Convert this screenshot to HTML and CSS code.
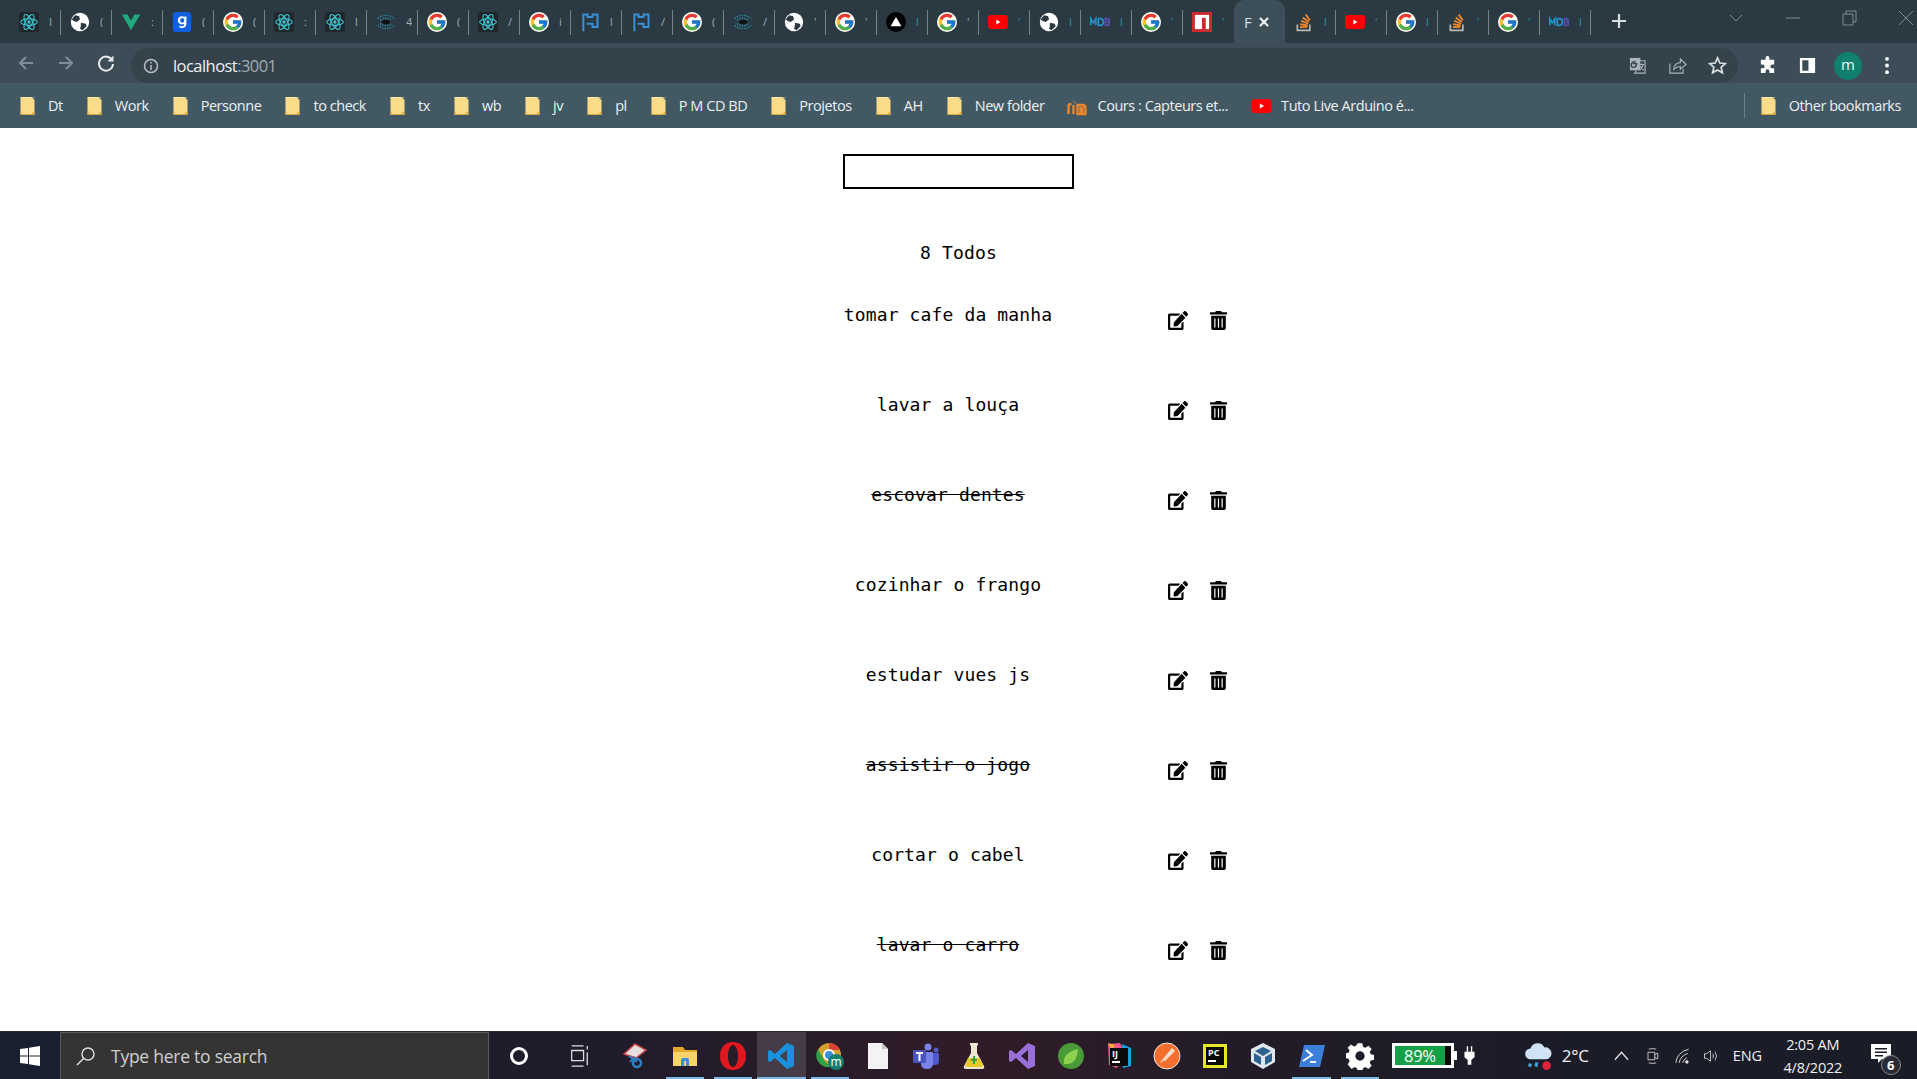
FILE: index.html
```html
<!DOCTYPE html>
<html lang="en">
<head>
<meta charset="utf-8">
<title>Todos</title>
<link rel="stylesheet" href="styles.css">
</head>
<body>
<svg class="defs" aria-hidden="true">
  <symbol id="react" viewBox="0 0 24 24"><rect width="24" height="24" rx="3" fill="#20272b"/><g fill="none" stroke="#3fc7d4" stroke-width="1.3"><ellipse cx="12" cy="12" rx="10" ry="4"/><ellipse cx="12" cy="12" rx="10" ry="4" transform="rotate(60 12 12)"/><ellipse cx="12" cy="12" rx="10" ry="4" transform="rotate(120 12 12)"/></g><circle cx="12" cy="12" r="2" fill="#3fc7d4"/></symbol>
  <symbol id="globe" viewBox="0 0 24 24"><circle cx="12" cy="12" r="11" fill="#fff"/><path d="M6 4l5 1 1 4-4 3-3-1-3-2zM13 13l6 1 1 3-5 5-3-2 1-3z" fill="#2a3840"/></symbol>
  <symbol id="vue" viewBox="0 0 24 24"><path d="M1 3h7l4 7 4-7h7L12 22z" fill="#1ea97c"/><path d="M8 3l4 7 4-7h-3l-1 2-1-2z" fill="#2a3840"/></symbol>
  <symbol id="gblue" viewBox="0 0 24 24"><rect x="1" width="22" height="24" rx="4" fill="#0f5fe0"/><path d="M12 5c-3 0-5 2-5 5s2 5 5 5c1 0 2-.4 2.6-1 0 2-.8 3-2.8 3-1 0-2-.3-3-.8v2.400c1 .4 2 .6 3.200.6 3.500 0 5.300-2 5.300-5.400V5.300h-2.300v.8C14 5.400 13 5 12 5zm.3 2.200c1.400 0 2.400 1.100 2.400 2.800s-1 2.800-2.400 2.800-2.500-1.100-2.500-2.800 1.100-2.800 2.500-2.800z" fill="#fff"/></symbol>
  <symbol id="google" viewBox="0 0 48 48"><circle cx="24" cy="24" r="24" fill="#fff"/><path d="M43.600 20.100H42V20H24v8h11.300C33.700 32.700 29.200 36 24 36c-6.600 0-12-5.400-12-12s5.400-12 12-12c3.100 0 5.800 1.200 8 3l5.700-5.700C34 6.100 29.300 4 24 4 13 4 4 13 4 24s9 20 20 20 20-9 20-20c0-1.300-.1-2.700-.4-3.900z" fill="#fbc02d"/><path d="M6.300 14.700l6.600 4.800C14.700 15.100 19 12 24 12c3.100 0 5.800 1.200 8 3l5.700-5.700C34 6.100 29.300 4 24 4 16.300 4 9.700 8.300 6.300 14.700z" fill="#e53935"/><path d="M24 44c5.200 0 9.900-2 13.400-5.200l-6.200-5.200C29.200 35.100 26.700 36 24 36c-5.200 0-9.600-3.300-11.300-7.900l-6.500 5C9.500 39.600 16.200 44 24 44z" fill="#4caf50"/><path d="M43.600 20.100H42V20H24v8h11.300c-.8 2.200-2.200 4.200-4.100 5.600l6.200 5.200C37 39.200 44 34 44 24c0-1.300-.1-2.700-.4-3.900z" fill="#1976d2"/></symbol>
  <symbol id="eye" viewBox="0 0 24 24"><g stroke="#2f8fb0" stroke-width="1.600" stroke-dasharray="1.500 1.500" fill="none"><path d="M2 8Q12 0 22 8"/><path d="M2 16Q12 24 22 16"/><path d="M5 10Q12 5 19 10"/><path d="M5 14Q12 19 19 14"/></g><ellipse cx="12" cy="12" rx="5" ry="2.500" fill="#111"/></symbol>
  <symbol id="flag" viewBox="0 0 24 24"><path d="M4 23V3h5v3h6V3h6v15h-6v-4H8" fill="none" stroke="#3a8fd6" stroke-width="2.400"/></symbol>
  <symbol id="triangle" viewBox="0 0 24 24"><circle cx="12" cy="12" r="12" fill="#000"/><path d="M12 6l6.500 11h-13z" fill="#fff"/></symbol>
  <symbol id="yt" viewBox="0 0 24 24"><rect y="3.500" width="24" height="17" rx="4" fill="#f00"/><path d="M10 9l5 3-5 3z" fill="#fff"/></symbol>
  <symbol id="mdb" viewBox="0 0 24 24"><g fill="none" stroke-width="2"><path d="M1 16V8l3 5 3-5v8" stroke="#1e93c9"/><path d="M10 8v8h2q4 0 4-4t-4-4z" stroke="#1e93c9"/><path d="M18.500 8v8h2q3 0 3-2t-3-2q2.500 0 2.500-2t-2.500-2z" stroke="#5c4fb3"/></g></symbol>
  <symbol id="npm" viewBox="0 0 24 24"><rect width="24" height="24" fill="#cb2a2f"/><rect x="3.500" y="3.500" width="17" height="17" fill="#fff"/><rect x="12" y="7" width="4.500" height="13.500" fill="#cb2a2f"/></symbol>
  <symbol id="so" viewBox="0 0 24 24"><path d="M4 15v7h15v-7" fill="none" stroke="#b9b7b4" stroke-width="2"/><g stroke="#f2892c" stroke-width="2.200"><path d="M7 18h9"/><path d="M7.300 14.500l9 1.600"/><path d="M8.500 10.500l8.500 3.600"/><path d="M10.500 6.500l7.300 5.400"/><path d="M14 3l5 7"/></g></symbol>
  <symbol id="folder" viewBox="0 0 16 20"><path d="M1 1h11l3 3v15H1z" fill="#fbdc8a"/><path d="M1 19V15h1v3h10l3-3v4z" fill="#d9a83c"/><path d="M1 1h14v1H1z" fill="#fff2c4" opacity=".4"/></symbol>
</svg>

<header class="chrome">
  <div class="tabstrip">
    <div class="tab"><svg class="favicon"><use href="#react"/></svg><span class="tab-title">I</span></div>
    <div class="tab"><svg class="favicon"><use href="#globe"/></svg><span class="tab-title">(</span></div>
    <div class="tab"><svg class="favicon"><use href="#vue"/></svg><span class="tab-title">:</span></div>
    <div class="tab"><svg class="favicon"><use href="#gblue"/></svg><span class="tab-title">(</span></div>
    <div class="tab"><svg class="favicon"><use href="#google"/></svg><span class="tab-title">(</span></div>
    <div class="tab"><svg class="favicon"><use href="#react"/></svg><span class="tab-title">:</span></div>
    <div class="tab"><svg class="favicon"><use href="#react"/></svg><span class="tab-title">l</span></div>
    <div class="tab"><svg class="favicon"><use href="#eye"/></svg><span class="tab-title">4</span></div>
    <div class="tab"><svg class="favicon"><use href="#google"/></svg><span class="tab-title">(</span></div>
    <div class="tab"><svg class="favicon"><use href="#react"/></svg><span class="tab-title">/</span></div>
    <div class="tab"><svg class="favicon"><use href="#google"/></svg><span class="tab-title">i</span></div>
    <div class="tab"><svg class="favicon"><use href="#flag"/></svg><span class="tab-title">l</span></div>
    <div class="tab"><svg class="favicon"><use href="#flag"/></svg><span class="tab-title">/</span></div>
    <div class="tab"><svg class="favicon"><use href="#google"/></svg><span class="tab-title">(</span></div>
    <div class="tab"><svg class="favicon"><use href="#eye"/></svg><span class="tab-title">/</span></div>
    <div class="tab"><svg class="favicon"><use href="#globe"/></svg><span class="tab-title">'</span></div>
    <div class="tab"><svg class="favicon"><use href="#google"/></svg><span class="tab-title">'</span></div>
    <div class="tab"><svg class="favicon"><use href="#triangle"/></svg><span class="tab-title tab-title-teal">l</span></div>
    <div class="tab"><svg class="favicon"><use href="#google"/></svg><span class="tab-title">'</span></div>
    <div class="tab"><svg class="favicon"><use href="#yt"/></svg><span class="tab-title tab-title-teal">'</span></div>
    <div class="tab"><svg class="favicon"><use href="#globe"/></svg><span class="tab-title tab-title-teal">l</span></div>
    <div class="tab"><svg class="favicon"><use href="#mdb"/></svg><span class="tab-title tab-title-teal">l</span></div>
    <div class="tab"><svg class="favicon"><use href="#google"/></svg><span class="tab-title tab-title-teal">'</span></div>
    <div class="tab"><svg class="favicon"><use href="#npm"/></svg><span class="tab-title tab-title-teal">'</span></div>
    <div class="tab tab-active"><span class="active-title">F</span><svg class="tab-close" viewBox="0 0 12 12"><path d="M2 2l8 8M10 2l-8 8"/></svg></div>
    <div class="tab"><svg class="favicon"><use href="#so"/></svg><span class="tab-title tab-title-teal">l</span></div>
    <div class="tab"><svg class="favicon"><use href="#yt"/></svg><span class="tab-title tab-title-teal">'</span></div>
    <div class="tab"><svg class="favicon"><use href="#google"/></svg><span class="tab-title tab-title-teal">l</span></div>
    <div class="tab"><svg class="favicon"><use href="#so"/></svg><span class="tab-title tab-title-teal">'</span></div>
    <div class="tab"><svg class="favicon"><use href="#google"/></svg><span class="tab-title tab-title-teal">'</span></div>
    <div class="tab"><svg class="favicon"><use href="#mdb"/></svg><span class="tab-title tab-title-teal">l</span></div>
    <svg class="new-tab" viewBox="0 0 16 16"><path d="M8 1v14M1 8h14"/></svg>
    <div class="window-controls">
      <svg class="win-icon" viewBox="0 0 16 16"><path d="M2 5l6 6 6-6"/></svg>
      <svg class="win-icon" viewBox="0 0 16 16"><path d="M1 8h14"/></svg>
      <svg class="win-icon" viewBox="0 0 16 16"><path d="M2 4h10v11H2zM5 4V1h10v11h-3"/></svg>
      <svg class="win-icon" viewBox="0 0 16 16"><path d="M1 1l14 14M15 1L1 15"/></svg>
    </div>
  </div>

  <div class="toolbar">
    <svg class="nav-icon nav-dim" viewBox="0 0 18 18"><path d="M16 9H3M9 3L3 9l6 6"/></svg>
    <svg class="nav-icon nav-dim" viewBox="0 0 18 18"><path d="M2 9h13M9 3l6 6-6 6"/></svg>
    <svg class="nav-icon" viewBox="0 0 18 18"><path d="M15 6a7 7 0 1 0 1 4"/><path class="solid" d="M16.500 1.500v6h-6z"/></svg>
    <div class="omnibox">
      <svg class="info" viewBox="0 0 16 16"><circle cx="8" cy="8" r="6.500"/><path d="M8 7v5M8 4v1.600"/></svg>
      <span class="url">localhost<span class="url-dim">:3001</span></span>
      <div class="omni-actions">
        <svg class="omni-icon" viewBox="0 0 20 20"><path class="solid-grey" d="M2 2h11v13H2z"/><path d="M9 5h9v13H7l2-3"/><path class="dark" d="M5 8h4c0 3-2 4-3.500 4S3 10.500 3.500 8.500 6 5.500 8 6.500"/><path d="M12 9h5M14.500 8v1M16 9q-1 4-4 6M13 11q1 3 4 4"/></svg>
        <svg class="omni-icon" viewBox="0 0 20 20"><path d="M2 8v10h14v-4"/><path d="M6 14c0-5 4-7 7-7V3l6 6-6 5v-3c-3 0-5 1-7 3z"/></svg>
        <svg class="omni-icon omni-star" viewBox="0 0 20 20"><path d="M10 2l2.400 5.400 5.800.6-4.400 3.900 1.300 5.700L10 14.700l-5.100 2.900 1.300-5.700L1.800 8l5.800-.6z"/></svg>
      </div>
    </div>
    <div class="browser-actions">
      <svg class="puzzle" viewBox="0 0 20 20"><path d="M8 2a2 2 0 0 1 4 0v2h5v5h-2a2 2 0 0 0 0 4h2v5h-5v-2a2 2 0 0 0-4 0v2H3v-5h2a2 2 0 0 0 0-4H3V4h5z"/></svg>
      <svg class="panel" viewBox="0 0 20 20"><path d="M2 2h16v16H2zM4.500 4.500v11H11v-11z" fill-rule="evenodd"/></svg>
      <span class="avatar">m</span>
      <svg class="dots" viewBox="0 0 4 20"><circle cx="2" cy="3" r="2"/><circle cx="2" cy="10" r="2"/><circle cx="2" cy="17" r="2"/></svg>
    </div>
  </div>

  <nav class="bookmarks">
    <a class="bm"><svg class="bm-folder"><use href="#folder"/></svg>Dt</a>
    <a class="bm"><svg class="bm-folder"><use href="#folder"/></svg>Work</a>
    <a class="bm"><svg class="bm-folder"><use href="#folder"/></svg>Personne</a>
    <a class="bm"><svg class="bm-folder"><use href="#folder"/></svg>to check</a>
    <a class="bm"><svg class="bm-folder"><use href="#folder"/></svg>tx</a>
    <a class="bm"><svg class="bm-folder"><use href="#folder"/></svg>wb</a>
    <a class="bm"><svg class="bm-folder"><use href="#folder"/></svg>jv</a>
    <a class="bm"><svg class="bm-folder"><use href="#folder"/></svg>pl</a>
    <a class="bm"><svg class="bm-folder"><use href="#folder"/></svg>P M CD BD</a>
    <a class="bm"><svg class="bm-folder"><use href="#folder"/></svg>Projetos</a>
    <a class="bm"><svg class="bm-folder"><use href="#folder"/></svg>AH</a>
    <a class="bm"><svg class="bm-folder"><use href="#folder"/></svg>New folder</a>
    <a class="bm"><svg class="bm-site" viewBox="0 0 20 20"><path d="M1 18v-8q0-2 3-2M6 18V9M10 18V9h5q3 0 3 3v6h-3v-6h-2v6z" fill="none" stroke="#e8872c" stroke-width="2.400"/><path d="M4 4l5 2-1 3z" fill="#7b6a5a"/></svg>Cours : Capteurs et...</a>
    <a class="bm"><svg class="bm-site"><use href="#yt"/></svg>Tuto Live Arduino é...</a>
    <a class="bm bm-other"><svg class="bm-folder"><use href="#folder"/></svg>Other bookmarks</a>
  </nav>
</header>

<main class="page">
  <form class="todo-form"><input class="todo-input" type="text" aria-label="New todo"></form>
  <p class="count">8 Todos</p>
  <ul class="todos">
    <li class="todo"><span class="todo-text">tomar cafe da manha</span><span class="todo-actions"><svg class="edit"><use href="#i-edit"/></svg><svg class="trash"><use href="#i-trash"/></svg></span></li>
    <li class="todo"><span class="todo-text">lavar a louça</span><span class="todo-actions"><svg class="edit"><use href="#i-edit"/></svg><svg class="trash"><use href="#i-trash"/></svg></span></li>
    <li class="todo"><span class="todo-text done">escovar dentes</span><span class="todo-actions"><svg class="edit"><use href="#i-edit"/></svg><svg class="trash"><use href="#i-trash"/></svg></span></li>
    <li class="todo"><span class="todo-text">cozinhar o frango</span><span class="todo-actions"><svg class="edit"><use href="#i-edit"/></svg><svg class="trash"><use href="#i-trash"/></svg></span></li>
    <li class="todo"><span class="todo-text">estudar vues js</span><span class="todo-actions"><svg class="edit"><use href="#i-edit"/></svg><svg class="trash"><use href="#i-trash"/></svg></span></li>
    <li class="todo"><span class="todo-text done">assistir o jogo</span><span class="todo-actions"><svg class="edit"><use href="#i-edit"/></svg><svg class="trash"><use href="#i-trash"/></svg></span></li>
    <li class="todo"><span class="todo-text">cortar o cabel</span><span class="todo-actions"><svg class="edit"><use href="#i-edit"/></svg><svg class="trash"><use href="#i-trash"/></svg></span></li>
    <li class="todo"><span class="todo-text done">lavar o carro</span><span class="todo-actions"><svg class="edit"><use href="#i-edit"/></svg><svg class="trash"><use href="#i-trash"/></svg></span></li>
  </ul>
  <svg class="defs" aria-hidden="true">
    <symbol id="i-edit" viewBox="0 0 576 512" preserveAspectRatio="none"><path d="M402.600 83.200l90.200 90.200c3.800 3.800 3.800 10 0 13.800L274.400 405.600l-92.800 10.300c-12.400 1.400-22.900-9.100-21.500-21.500l10.300-92.800L388.800 83.200c3.800-3.800 10-3.800 13.800 0zm162-22.900l-48.800-48.800c-15.200-15.200-39.900-15.200-55.200 0l-35.400 35.400c-3.800 3.800-3.800 10 0 13.800l90.200 90.200c3.800 3.800 10 3.800 13.800 0l35.400-35.400c15.200-15.300 15.200-40 0-55.200zM384 346.200V448H64V128h229.800c3.200 0 6.200-1.300 8.500-3.500l40-40c7.600-7.600 2.200-20.500-8.500-20.500H48C21.500 64 0 85.500 0 112v352c0 26.500 21.500 48 48 48h352c26.500 0 48-21.500 48-48V306.200c0-10.700-12.900-16-20.500-8.500l-40 40c-2.200 2.300-3.500 5.300-3.500 8.500z"/></symbol>
    <symbol id="i-trash" viewBox="0 0 448 512" preserveAspectRatio="none"><path d="M32 464a48 48 0 0 0 48 48h288a48 48 0 0 0 48-48V128H32zm272-256a16 16 0 0 1 32 0v224a16 16 0 0 1-32 0zm-96 0a16 16 0 0 1 32 0v224a16 16 0 0 1-32 0zm-96 0a16 16 0 0 1 32 0v224a16 16 0 0 1-32 0zM432 32H312l-9.400-18.700A24 24 0 0 0 281.100 0H166.800a23.720 23.720 0 0 0-21.400 13.300L136 32H16A16 16 0 0 0 0 48v32a16 16 0 0 0 16 16h416a16 16 0 0 0 16-16V48a16 16 0 0 0-16-16z"/></symbol>
  </svg>
</main>

<footer class="taskbar">
  <div class="start"><svg class="win-logo" viewBox="0 0 20 20"><path d="M0 3l8-1v7.500H0zM9 1.800L20 0v9.500H9zM0 10.500h8V18l-8-1zM9 10.500h11V20L9 18.200z"/></svg></div>
  <div class="search">
    <svg class="search-icon" viewBox="0 0 20 20"><circle cx="12" cy="8" r="6"/><path d="M8 12l-7 7"/></svg>
    <span>Type here to search</span>
  </div>
  <div class="tb-btn tb-wide"><span class="cortana"></span></div>
  <div class="tb-btn tb-wide"><svg class="taskview" viewBox="0 0 24 24"><path d="M4 1h13M4 23h13M4 6h13v11H4zM21 1v4M21 8v14"/></svg></div>
  <div class="tb-btn tb-snip"><svg class="tb-icon" viewBox="0 0 28 28"><path d="M3 12L14 2l11 6-10 8z" fill="#e6dedd" stroke="#c9464f" stroke-width="1.500"/><circle cx="16" cy="21" r="4" fill="none" stroke="#2f7fc0" stroke-width="2.500"/><path d="M8 14l8 6M9 20l5-5" stroke="#2f7fc0" stroke-width="2"/></svg></div>
  <div class="tb-btn tb-on"><svg class="tb-icon" viewBox="0 0 28 28"><path d="M2 5h10l2 3h12v4H2z" fill="#e6a92b"/><path d="M2 10h24v14H2z" fill="#f9d46b"/><path d="M10 24v-6q0-2 2-2h4q2 0 2 2v6h-3v-5h-2v5z" fill="#3a8fd6"/></svg></div>
  <div class="tb-btn tb-on"><svg class="tb-icon" viewBox="0 0 28 28"><path fill-rule="evenodd" d="M14 0c8 0 13 6 13 14s-5 14-13 14S1 22 1 14 6 0 14 0zm0 3c-3 0-5 5-5 11s2 11 5 11 5-5 5-11-2-11-5-11z" fill="#e0171f"/></svg></div>
  <div class="tb-btn tb-on tb-active"><svg class="tb-icon" viewBox="0 0 28 28"><path d="M20 1l7 3v20l-7 3L8 16l-5 4-2-1V9l2-1 5 4zm0 7l-7 6 7 6z" fill="#1a8fdc"/></svg></div>
  <div class="tb-btn tb-on"><svg class="tb-icon" viewBox="0 0 28 28"><circle cx="13" cy="13" r="12" fill="#d5a12a"/><path d="M13 1a12 12 0 0 1 11 7H13z" fill="#d94235"/><path d="M2 7l6 11 6 7a12 12 0 0 1-12-18z" fill="#2fa04a"/><circle cx="13" cy="13" r="5" fill="#3a8fd6" stroke="#fff" stroke-width="2"/><circle cx="20" cy="20" r="8" fill="#11806f"/><text class="tb-m" x="20" y="24">m</text></svg></div>
  <div class="tb-btn"><svg class="tb-icon" viewBox="0 0 28 28"><path d="M4 1h14l6 6v20H4z" fill="#f3f3f3"/><path d="M18 1l6 6h-6z" fill="#c8c8c8"/></svg></div>
  <div class="tb-btn"><svg class="tb-icon" viewBox="0 0 28 28"><circle cx="16" cy="5" r="3.500" fill="#7b83eb"/><circle cx="24" cy="8" r="2.500" fill="#5059c9"/><path d="M19 11h8v8q0 4-4 4h-4z" fill="#5059c9"/><path d="M9 10h12v11q0 6-6 6t-6-6z" fill="#7b83eb"/><rect x="1" y="8" width="13" height="13" rx="1" fill="#4b53bc"/><path d="M4 11h7M7.500 11v8" stroke="#fff" stroke-width="2"/></svg></div>
  <div class="tb-btn"><svg class="tb-icon" viewBox="0 0 28 28"><path d="M10 1h8v2l-1 1v7l7 13q1 3-2 3H6q-3 0-2-3l7-13V4l-1-1z" fill="#ece8d2"/><path d="M8 16h12l3 8q0 1-2 1H7q-2 0-2-1z" fill="#e8c92b"/><path d="M14 14v8M11 18h6" stroke="#3f9c3f" stroke-width="2"/></svg></div>
  <div class="tb-btn"><svg class="tb-icon" viewBox="0 0 28 28"><path d="M20 1l7 3v20l-7 3L8 16l-5 4-2-1V9l2-1 5 4zm0 7l-7 6 7 6z" fill="#9a6fd8"/></svg></div>
  <div class="tb-btn"><svg class="tb-icon" viewBox="0 0 28 28"><circle cx="14" cy="14" r="13" fill="#4a9a37"/><path d="M7 22q-2-11 14-15-1 14-10 15-2 0-4 0z" fill="#8fd14f"/></svg></div>
  <div class="tb-btn"><svg class="tb-icon" viewBox="0 0 28 28"><path d="M3 2l12-1 4 8-7 17-8-3z" fill="#f0568d"/><path d="M17 2l9 4v18l-8 2z" fill="#17a2e0"/><path d="M3 1l7 2-3 6z" fill="#f9b233"/><rect x="5" y="6" width="18" height="18" fill="#0b0b0b"/><text class="tb-ij" x="7" y="15">IJ</text><rect x="7" y="19" width="8" height="2" fill="#fff"/></svg></div>
  <div class="tb-btn"><svg class="tb-icon" viewBox="0 0 28 28"><circle cx="14" cy="14" r="13" fill="#f36f2e" stroke="#f5e6dc"/><path d="M19 6l3 3-10 10-3-1z" fill="#f7ddcb"/><path d="M7 21l2-3 1 1z" fill="#fff"/></svg></div>
  <div class="tb-btn"><svg class="tb-icon" viewBox="0 0 28 28"><rect x="2" y="2" width="24" height="24" fill="#e6e62a"/><rect x="5" y="5" width="18" height="18" fill="#0b0b0b"/><text class="tb-pc" x="7" y="14">PC</text><rect x="7" y="18" width="8" height="2" fill="#fff"/></svg></div>
  <div class="tb-btn"><svg class="tb-icon" viewBox="0 0 28 28"><path d="M14 1l12 6v13l-12 7-12-7V7z" fill="#dfe7ef"/><path d="M14 5l8 4-8 5-8-5zM5 11l7 4v8l-7-4zM23 11l-7 4v8l7-4z" fill="#2d5f8f"/></svg></div>
  <div class="tb-btn tb-on"><svg class="tb-icon" viewBox="0 0 28 28"><path d="M6 3h21l-5 22H1z" fill="#3c7fd9"/><path d="M8 8l6 5-9 6M12 20h6" fill="none" stroke="#fff" stroke-width="2"/></svg></div>
  <div class="tb-btn tb-on"><svg class="tb-icon" viewBox="0 0 24 24"><path fill-rule="evenodd" fill="#fff" d="M10 1h4l.6 3 2 .9 2.600-1.700 2.800 2.800-1.700 2.600.9 2 3 .6v4l-3 .6-.9 2 1.700 2.600-2.800 2.800-2.600-1.700-2 .9-.6 3h-4l-.6-3-2-.9-2.600 1.700L1.400 19l1.700-2.600-.9-2-3-.6v-4l3-.6.9-2L1.400 5l2.800-2.800 2.600 1.700 2-.9zM12 8a4 4 0 1 0 0 8 4 4 0 0 0 0-8z"/></svg></div>

  <div class="battery"><span class="battery-level">89%</span><span class="battery-tip"></span></div>
  <svg class="plug" viewBox="0 0 12 20"><path d="M3 0h1.500v6h3V0H9v6h2.500v6L8 15v5H4v-5L.5 12V6H3z"/></svg>
  <svg class="weather" viewBox="0 0 28 28"><path d="M7 17a5 5 0 0 1 0-10 7 7 0 0 1 13-1 5.500 5.500 0 0 1 2 11z" fill="#cfe3f5"/><path d="M7 21l-1 3M13 20l-1 4" stroke="#4a9ad8" stroke-width="3"/><circle cx="22" cy="23" r="4" fill="#e0243a"/></svg>
  <span class="temp">2°C</span>
  <svg class="tray tray-up" viewBox="0 0 18 18"><path d="M2 13l7-8 7 8"/></svg>
  <svg class="tray" viewBox="0 0 18 24"><path d="M4 3q5-2 10 0M4 21q5 2 10 0M3 7h9v10H3zM12 10l4-2v8l-4-2"/></svg>
  <svg class="tray tray-wifi" viewBox="0 0 20 20"><path d="M1 18Q2 6 16 2M5 18q1-8 10-11M9 18q1-4 5-6"/><circle cx="14" cy="17" r="1.500"/></svg>
  <svg class="tray tray-vol" viewBox="0 0 20 20"><path d="M2 7h3l5-4v14l-5-4H2zM13 7q2 3 0 6M16 4q4 6 0 12"/></svg>
  <span class="lang">ENG</span>
  <div class="clock"><span>2:05 AM</span><span>4/8/2022</span></div>
  <div class="notif">
    <svg class="notif-icon" viewBox="0 0 20 20"><path fill-rule="evenodd" d="M0 0h20v15H11l-4 4v-4H0zM4 4v1.500h12V4zM4 7.500V9h12V7.500zM4 11v1.500h8V11z"/></svg>
    <span class="notif-badge">6</span>
  </div>
</footer>
</body>
</html>
```
FILE: styles.css
```css
* { box-sizing: border-box; }
html, body { margin: 0; height: 100%; }
body { display: flex; flex-direction: column; height: 100vh; overflow: hidden; background: #fff; font-family: "Open Sans", "Noto Sans", sans-serif; }
.defs { width: 0; height: 0; position: absolute; }

/* tab strip */
.chrome { flex: none; }
.tabstrip { height: 43px; background: #2b3a42; display: flex; align-items: stretch; padding-left: 10px; position: relative; }
.tab { width: 51px; flex: none; display: flex; align-items: center; padding-left: 9px; position: relative; }
.tab::after { content: ""; position: absolute; right: 0; top: 10px; height: 25px; width: 1px; background: #74838b; }
.tab-active { background: #3d4f59; border-radius: 10px 10px 0 0; padding-left: 10px; }
.tab-active::after { display: none; }
.tab:has(+ .tab-active)::after { display: none; }
.favicon { width: 20px; height: 20px; flex: none; }
.tab-title { font-size: 11px; color: #9eb0b8; margin-left: 10px; line-height: 1; width: 6px; overflow: hidden; }
.tab-title-teal { color: #2b93a8; }
.active-title { color: #d8dfe3; font-size: 15px; width: 9px; overflow: hidden; }
.tab-close { width: 12px; height: 12px; margin-left: 5px; fill: none; stroke: #fff; stroke-width: 2; }
.new-tab { width: 16px; height: 16px; margin: 13px 0 0 20px; fill: none; stroke: #d9dee1; stroke-width: 2.200; flex: none; }
.window-controls { margin-left: 101px; display: flex; gap: 40.500px; align-items: center; height: 36px; }
.win-icon { width: 16px; height: 16px; fill: none; stroke: #7d8b93; stroke-width: 1; flex: none; }

/* toolbar */
.toolbar { height: 40px; background: #3c4d57; display: flex; align-items: center; padding: 0 0 0 17px; position: relative; }
.nav-icon { width: 18px; height: 18px; fill: none; stroke: #e6eaec; stroke-width: 2; margin-right: 22px; flex: none; }
.nav-dim { stroke: #7f8e96; }
.nav-icon .solid { fill: #e6eaec; stroke: none; }
.omnibox { margin-left: -6px; width: 1607px; height: 35px; margin-top: 5px; border-radius: 18px; background: #34434b; display: flex; align-items: center; padding-left: 12px; flex: none; }
.info { width: 16px; height: 16px; fill: none; stroke: #b5bfc4; stroke-width: 1.500; flex: none; }
.url { margin-left: 14px; font-size: 16.500px; letter-spacing: -.55px; color: #eef1f2; }
.url-dim { color: #a1adb3; }
.omni-actions { margin-left: auto; display: flex; gap: 21px; padding-right: 11px; }
.omni-icon { width: 19px; height: 19px; fill: none; stroke: #a9b4ba; stroke-width: 1.200; flex: none; }
.omni-icon .solid-grey { fill: #a9b4ba; stroke: none; }
.omni-icon .dark { stroke: #34434b; stroke-width: 1.500; }
.omni-star { stroke: #d9dee1; stroke-width: 1.800; }
.browser-actions { display: flex; align-items: center; margin-left: 20px; margin-top: 5px; }
.puzzle { width: 19px; height: 19px; fill: #fff; flex: none; }
.panel { width: 19px; height: 19px; fill: #fff; margin-left: 21px; flex: none; }
.avatar { width: 28px; height: 28px; border-radius: 50%; background: #11806f; color: #dff; font-size: 15px; display: flex; align-items: center; justify-content: center; margin-left: 17px; flex: none; line-height: 1; padding-bottom: 3px; }
.dots { width: 4px; height: 19px; fill: #fff; margin-left: 23px; flex: none; }

/* bookmarks */
.bookmarks { height: 45px; background: #425964; display: flex; align-items: center; padding-left: 19px; gap: 23px; }
.bm { display: flex; align-items: center; color: #edf0f1; font-size: 14.500px; letter-spacing: -.45px; white-space: nowrap; }
.bm-folder { width: 17px; height: 20px; margin-right: 12px; flex: none; }
.bm-site { width: 21px; height: 20px; margin-right: 9px; flex: none; }
.bm-other { margin-left: auto; margin-right: 16px; position: relative; padding-left: 15px; border-left: 1px solid #6c7f89; height: 25px; }

/* page */
.page { flex: 1; min-height: 0; background: #fff; display: flex; flex-direction: column; align-items: center; padding-top: 26px; overflow: hidden; font-family: "DejaVu Sans Mono", monospace; font-size: 18px; color: #000; }
.todo-form { margin: 0; }
.todo-input { display: block; width: 231px; height: 35px; border: 2px solid #000; background: #fff; padding: 0; outline: none; }
.count { margin: 53px 0 0; line-height: 22px; letter-spacing: .13px; }
.todos { list-style: none; margin: 40px 0 0; padding: 0; width: 231px; }
.todo { display: flex; height: 90px; align-items: flex-start; }
.todo-text { flex: 0 0 210px; text-align: center; line-height: 22px; letter-spacing: .13px; white-space: nowrap; }
.todo-actions { flex: none; margin: 7px 0 0 115px; display: flex; gap: 22px; }
.done { text-decoration: line-through; }
.edit { width: 20px; height: 19px; flex: none; }
.trash { width: 17px; height: 19px; flex: none; }

/* taskbar */
.taskbar { flex: none; height: 48px; display: flex; align-items: center; background: linear-gradient(90deg, #182030 0, #1e1c2b 30%, #301c28 50%, #241c28 62%, #1b1c28 80%, #1a1c28 100%); color: #f0f0f0; border-top: 1px solid #2a2a34; }
.start { width: 60px; height: 100%; display: flex; align-items: center; justify-content: center; flex: none; }
.win-logo { width: 20px; height: 20px; fill: #fff; }
.search { width: 429px; height: 100%; background: #343434; border: 1px solid #5a5a5a; border-width: 1px 1px 0; display: flex; align-items: center; padding-left: 15px; font-size: 17.500px; letter-spacing: -.25px; color: #cfcfcf; flex: none; }
.search-icon { width: 20px; height: 20px; fill: none; stroke: #e0e0e0; stroke-width: 1.400; margin-right: 15px; flex: none; }
.tb-btn { width: 48.200px; height: 100%; flex: none; display: flex; align-items: center; justify-content: center; position: relative; }
.tb-wide { width: 60px; }
.tb-snip { width: 52px; }
.cortana { width: 18px; height: 18px; border: 3px solid #fff; border-radius: 50%; }
.taskview { width: 22px; height: 22px; fill: none; stroke: #ddd; stroke-width: 1.400; }
.tb-icon { width: 28px; height: 28px; flex: none; }
.tb-on::after { content: ""; position: absolute; left: 5px; right: 5px; bottom: 0; height: 2px; background: #76b9ed; }
.tb-active { background: rgba(255,255,255,.14); }
.tb-active::after { left: 0; right: 0; }
.tb-m { font: 12px "Open Sans", sans-serif; fill: #fff; text-anchor: middle; }
.tb-ij, .tb-pc { font: bold 9px "Open Sans", sans-serif; fill: #fff; }

.battery { width: 62px; height: 25px; border: 3px solid #fff; background: #0c0c0c; margin-left: 8px; display: flex; flex: none; position: relative; }
.battery-level { width: 50px; background: #16a045; color: #fff; font-size: 16.500px; letter-spacing: -.3px; line-height: 19px; text-align: center; }
.battery-tip { position: absolute; right: -6px; top: 5px; width: 3px; height: 9px; background: #fff; }
.plug { width: 11px; height: 19px; fill: #fff; margin-left: 10px; flex: none; }
.weather { width: 30px; height: 30px; margin-left: 48px; flex: none; }
.temp { font-size: 17px; margin-left: 9px; width: 30px; letter-spacing: -.3px; flex: none; }
.tray { width: 15px; height: 18px; fill: none; stroke: #e2e2e2; stroke-width: 1.100; margin-left: 15px; flex: none; }
.tray-up { margin-left: 21px; width: 17px; stroke-width: 1.400; }
.tray-wifi { width: 17px; }
.tray-wifi circle { fill: #fff; }
.tray-vol { margin-left: 11px; }
.lang { font-size: 14.500px; margin-left: 15px; width: 30px; letter-spacing: -.2px; flex: none; }
.clock { width: 74px; margin-left: 13px; display: flex; flex-direction: column; align-items: center; font-size: 14.500px; letter-spacing: -.2px; line-height: 23px; flex: none; }
.notif { margin-left: 21px; width: 26px; height: 30px; position: relative; flex: none; }
.notif-icon { width: 20px; height: 20px; fill: #fff; position: absolute; left: 0; top: 3px; }
.notif-badge { position: absolute; right: -4px; bottom: -4px; width: 20px; height: 20px; border-radius: 50%; background: #2b2b36; border: 1px solid #888; color: #fff; font-size: 13px; font-weight: 700; display: flex; align-items: center; justify-content: center; }
```
